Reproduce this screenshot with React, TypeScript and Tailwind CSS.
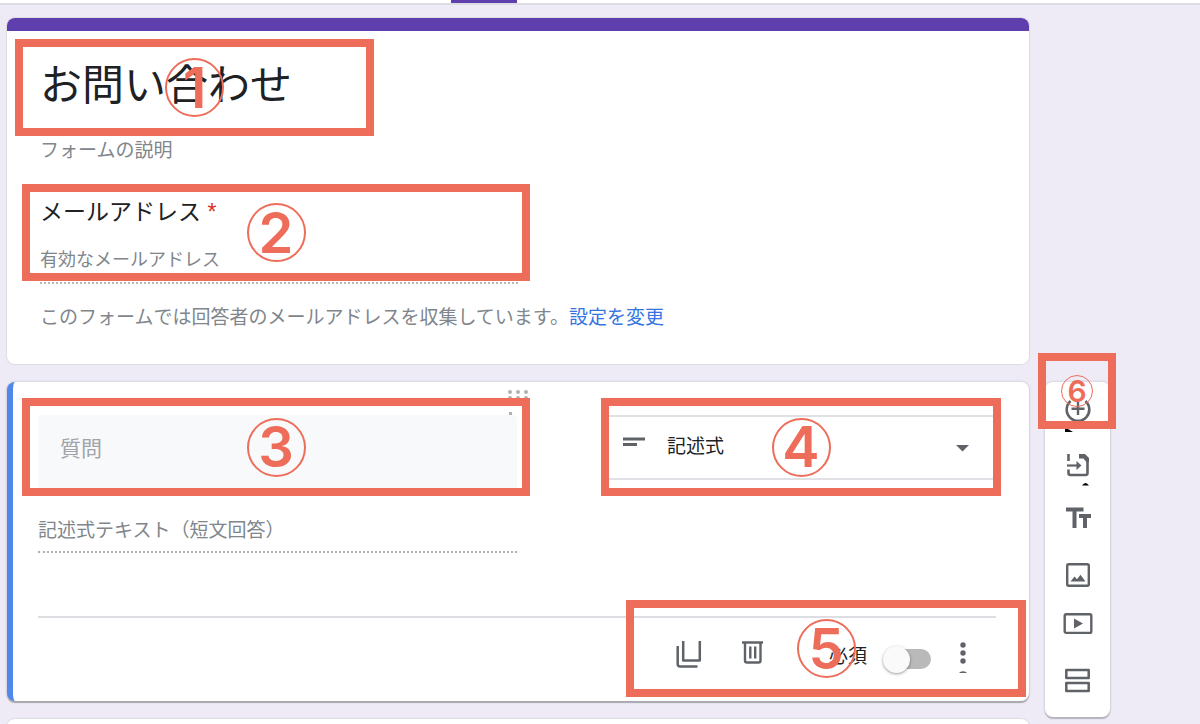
import React, { useState } from 'react';

interface CalloutProps {
  number: number;
  className: string;
  small?: boolean;
}

// Numbered highlight frame that sits over a part of the form
const Callout: React.FC<CalloutProps> = ({ number, className, small }) => (
  <div
    className={`absolute z-10 flex items-center justify-center border-8 border-[#ee6d5a] pointer-events-none ${className}`}
  >
    <span
      className={`flex shrink-0 items-center justify-center rounded-full border-[#ee6d5a] font-['Inter',sans-serif] font-semibold leading-none text-[#ee6d5a] ${
        small ? 'size-8 border text-[30px]' : 'size-[59px] border-2 text-[56px]'
      }`}
    >
      {number}
    </span>
  </div>
);

const tools = [
  {
    label: '質問を追加',
    icon: (
      <>
        <path d="M8.6 19A11.3 11.3 0 1 0 23.4 19" fill="none" stroke="#5f6368" strokeWidth="2.6" />
        <path d="M16 20v13M9.5 26.7h13" stroke="#5f6368" strokeWidth="2.4" />
        <path d="M3 47h3l5 3H3z" fill="#000" />
      </>
    ),
  },
  {
    label: '質問をインポート',
    icon: (
      <>
        <path d="M6.5 18v7M6.5 33.500v3.500q0 2 2 2h15q2 0 2-2V24" fill="none" stroke="#5f6368" strokeWidth="2.6" />
        <path d="M17 18h6l4 4v4h-2.600l-3-3.500H17z" fill="#5f6368" />
        <path d="M5 29.500h11" stroke="#5f6368" strokeWidth="2.2" />
        <path d="M14.500 25l5 4.500-5 4.500z" fill="#5f6368" />
        <path d="M20 49.500q3.500-5 7 0z" fill="#000" />
      </>
    ),
  },
  {
    label: 'タイトルと説明を追加',
    icon: <path d="M4 17.500h17.500v4H14.500V38H10.500V21.500H4zM17 24h12v4h-4v10h-4V28h-4z" fill="#5f6368" />,
  },
  {
    label: '画像を追加',
    icon: (
      <>
        <rect x="5.200" y="20.200" width="21.600" height="21.600" rx="1.500" fill="none" stroke="#5f6368" strokeWidth="2.400" />
        <path d="M8.500 37.500l4-5 2.500 2.800 3.500-4.600 5 6.800z" fill="#5f6368" />
      </>
    ),
  },
  {
    label: '動画を追加',
    icon: (
      <>
        <rect x="2.700" y="16.300" width="26.600" height="18.600" rx="1.500" fill="none" stroke="#5f6368" strokeWidth="2.400" />
        <path d="M12 20.500l9 5-9 5z" fill="#5f6368" />
      </>
    ),
  },
  {
    label: 'セクションを追加',
    icon: (
      <path
        d="M4.300 18h22.400v8H4.300zM4.300 31h22.400v8H4.300z"
        fill="none"
        stroke="#5f6368"
        strokeWidth="2.500"
        strokeLinejoin="round"
      />
    ),
  },
];

const App: React.FC = () => {
  const [title, setTitle] = useState('お問い合わせ');
  const [required, setRequired] = useState(false);

  return (
    <div className="h-screen overflow-hidden bg-[#eeebf6] font-['Liberation_Sans','Noto_Sans_CJK_JP',sans-serif] text-[#202124]">
      {/* Bottom edge of the top bar */}
      <header className="h-[5px] border-b-2 border-[#dddce2] bg-white">
        <div className="ml-[451px] h-[3px] w-[66px] bg-[#5f3fae]" />
      </header>

      <main className="grid grid-cols-[minmax(0,1fr)_65px] gap-x-4 gap-y-[18px] pt-[13px] pr-[90px] pl-[7px]">
        {/* Form header */}
        <section className="relative rounded-lg bg-white pb-8 shadow-[0_0_1px_1px_#dadce0]">
          <div className="h-[13px] rounded-t-lg bg-[#5f3fae]" />
          <div className="px-[33px] pt-6">
            <input
              aria-label="フォームのタイトル"
              className="block h-[60px] w-full text-[42px] outline-none"
              value={title}
              onChange={(e) => setTitle(e.target.value)}
            />
            <input
              aria-label="フォームの説明"
              placeholder="フォームの説明"
              className="mt-[22px] block h-7 w-full text-[19px] outline-none placeholder:text-[#80868b]"
            />
            <label htmlFor="email" className="mt-[31px] block h-8 text-[23px] leading-8">
              メールアドレス <span className="text-[#d93025]">*</span>
            </label>
            <input
              id="email"
              type="email"
              placeholder="有効なメールアドレス"
              className="mt-4 block h-10 w-1/2 border-b-2 border-dotted border-[#b8b8b8] pb-1.5 text-[18px] outline-none placeholder:text-[#80868b]"
            />
            <p className="mt-5 text-[19px] leading-7 whitespace-nowrap text-[#80868b]">
              このフォームでは回答者のメールアドレスを収集しています。
              <a href="#settings" className="text-[#3574e3]">設定を変更</a>
            </p>
          </div>
          <Callout number={1} className="top-[21px] left-2 h-[97px] w-[359px]" />
          <Callout number={2} className="top-[166px] left-[15px] h-[97px] w-[508px]" />
        </section>

        {/* Question editor */}
        <section className="relative col-start-1 rounded-lg border-l-6 border-[#5087ed] bg-white pt-[33px] pr-[33px] pl-[25px] pb-7 shadow-[0_2px_1px_#a9a8ae,0_0_2px_1px_#d6d4dc]">
          <svg className="absolute top-1.5 left-[493px]" width="24" height="28" fill="#b0b0b0" aria-hidden="true">
            <circle cx="4" cy="4" r="2" />
            <circle cx="12" cy="4" r="2" />
            <circle cx="20" cy="4" r="2" />
            <circle cx="4" cy="10" r="2" />
            <circle cx="12" cy="10" r="2" />
            <circle cx="20" cy="10" r="2" />
            <rect x="3" y="24" width="3" height="3" />
          </svg>

          <div className="flex items-start justify-between">
            <input
              aria-label="質問"
              placeholder="質問"
              className="h-[73px] w-1/2 rounded-t bg-[#f8f9fa] px-[22px] pb-1.5 text-[21px] outline-none placeholder:text-[#a0a4a8]"
            />
            <div className="relative w-[395px]">
              <select
                aria-label="質問の形式"
                className="h-[65px] w-full appearance-none rounded border-2 border-[#e0e1e5] bg-white pl-16 text-[19px] outline-none"
              >
                <option>記述式</option>
                <option>段落</option>
                <option>ラジオボタン</option>
              </select>
              <svg className="pointer-events-none absolute top-5 left-[22px]" width="24" height="14" fill="#5f6368" aria-hidden="true">
                <path d="M0 2.500h22v3H0zM0 8h14v3H0z" />
              </svg>
              <svg className="pointer-events-none absolute top-[30px] right-[27px]" width="14" height="8" fill="#5f6368" aria-hidden="true">
                <path d="M1 0h13L7.500 6.500z" />
              </svg>
            </div>
          </div>

          <p className="mt-[29px] h-9 w-1/2 border-b-2 border-dotted border-[#b0b0b0] text-[19px] leading-7 text-[#80868b]">
            記述式テキスト（短文回答）
          </p>

          <div className="mt-[63px] flex h-[57px] items-end justify-end border-t-2 border-[#dddee1] pr-[21px]">
            <button type="button" aria-label="コピーを作成" className="mr-[38px]">
              <svg className="block" width="28" height="32" fill="none" stroke="#5f6368" strokeWidth="2.500" aria-hidden="true">
                <path d="M8.200 0v19.500h16.600V0" strokeLinejoin="round" />
                <path d="M2.700 5v18q0 2.500 2.500 2.500h17.300" />
              </svg>
            </button>
            <button type="button" aria-label="削除" className="mr-16">
              <svg className="block" width="24" height="32" fill="none" stroke="#5f6368" strokeWidth="2.400" aria-hidden="true">
                <path d="M1 1.500h21M4 2v17.500q0 2 2 2h11.500q2 0 2-2V2" />
                <path d="M9.300 5.500v12M14.200 5.500v12" />
              </svg>
            </button>
            <label htmlFor="required" className="mr-4 text-[19px] leading-8">必須</label>
            <input
              id="required"
              type="checkbox"
              role="switch"
              checked={required}
              onChange={(e) => setRequired(e.target.checked)}
              className="relative mr-5 h-8 w-12 appearance-none before:absolute before:top-2 before:right-0 before:h-5 before:w-[41px] before:rounded-full before:bg-[#b9b9b9] after:absolute after:top-[5px] after:left-0 after:size-[27px] after:rounded-full after:bg-[#fafafa] after:shadow-[0_1px_3px_rgba(0,0,0,0.4)] checked:after:left-[21px]"
            />
            <button type="button" aria-label="その他のオプション">
              <svg className="block" width="24" height="32" fill="#5f6368" aria-hidden="true">
                <circle cx="12" cy="4" r="2.700" />
                <circle cx="12" cy="12" r="2.700" />
                <circle cx="12" cy="20" r="2.700" />
                <path d="M8 32q1-1.800 4-1.800t4 1.800z" />
              </svg>
            </button>
          </div>
          <Callout number={3} className="top-4 left-[9px] h-[98px] w-[508px]" />
          <Callout number={4} className="top-4 right-7 h-[98px] w-[400px]" />
          <Callout number={5} className="top-[218px] right-[3px] h-[97px] w-[400px]" />
        </section>

        {/* Floating toolbar */}
        <aside className="relative col-start-2 row-span-2 row-start-2 self-start rounded-lg bg-white pb-[11px] shadow-[0_2px_1px_#b4b2ba,0_0_2px_1px_#d6d4dc]">
          {tools.map((tool) => (
            <button key={tool.label} type="button" aria-label={tool.label} className="flex h-[54px] w-full justify-center">
              <svg width="32" height="54" aria-hidden="true">
                {tool.icon}
              </svg>
            </button>
          ))}
          <Callout number={6} small className="-top-[29px] -left-[7px] h-[76px] w-[78px]" />
        </aside>

        {/* Next question, mostly below the fold */}
        <section className="col-start-1 h-40 rounded-lg bg-white shadow-[0_0_1px_1px_#dadce0]" />
      </main>
    </div>
  );
};

export default App;
